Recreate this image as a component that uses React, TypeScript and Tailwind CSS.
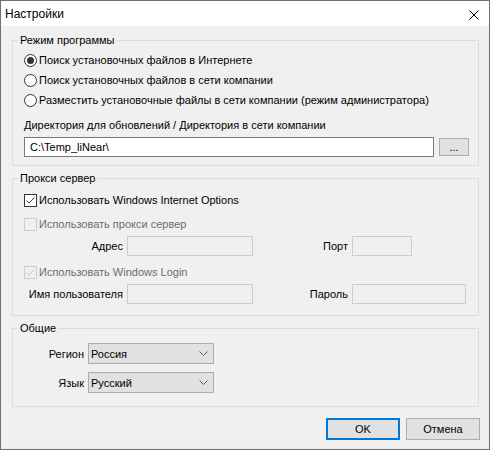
import React from "react";

type BoxProps = { checked?: boolean; disabled?: boolean; label: string };

function Radio({ checked, label }: BoxProps) {
  return (
    <label className="flex h-[20px] items-center">
      <span className="flex h-[13px] w-[13px] items-center justify-center rounded-full border border-[#333333] bg-white">
        {checked && <span className="h-[7px] w-[7px] rounded-full bg-[#333333]" />}
      </span>
      <span className="ml-[2px]">{label}</span>
    </label>
  );
}

function Checkbox({ checked, disabled, label }: BoxProps) {
  return (
    <label className="flex h-[20px] items-center">
      <span
        className={`flex h-[13px] w-[13px] items-center justify-center border ${
          disabled ? "border-[#cccccc] bg-[#f0f0f0]" : "border-[#333333] bg-white"
        }`}
      >
        {checked && (
          <svg width="11" height="11" viewBox="0 0 11 11">
            <path
              d="M1.5 5.5 L4 8 L9.5 2.5"
              fill="none"
              stroke={disabled ? "#c4c4c4" : "#333333"}
              strokeWidth="1"
            />
          </svg>
        )}
      </span>
      <span className={`ml-[2px] ${disabled ? "text-[#6d6d6d]" : ""}`}>{label}</span>
    </label>
  );
}

function GroupBox({ title, className, children }: { title: string; className?: string; children: React.ReactNode }) {
  return (
    <fieldset className={`border border-[#dcdcdc] ${className ?? ""}`}>
      <legend className="ml-[5px] px-[2px] leading-[15px]">{title}</legend>
      {children}
    </fieldset>
  );
}

function Combo({ value }: { value: string }) {
  return (
    <div className="flex h-[21px] w-[126px] items-center justify-between border border-[#adadad] bg-[#e1e1e1] pl-[2px] pr-[5px]">
      <span>{value}</span>
      <svg width="9" height="5" viewBox="0 0 9 5">
        <path d="M0.5 0.5 L4.5 4.5 L8.5 0.5" fill="none" stroke="#606060" strokeWidth="1" />
      </svg>
    </div>
  );
}

// disabled text box of the proxy section
function Field({ width }: { width: string }) {
  return <div className={`h-[20px] border border-[#cccccc] bg-[#f0f0f0] ${width}`} />;
}

export default function App() {
  return (
    <div className="flex h-[450px] w-[490px] flex-col whitespace-nowrap border border-[#707070] bg-[#f0f0f0] font-['Liberation_Sans',sans-serif] text-[11px] leading-[16px] text-black">
      {/* title bar */}
      <div className="flex h-[25px] items-center justify-between bg-white pl-[4px] pr-[10px]">
        <span className="text-[12px]">Настройки</span>
        <svg width="10" height="10" viewBox="0 0 10 10" className="mt-[2px]">
          <path d="M0.5 0.5 L9.5 9.5 M9.5 0.5 L0.5 9.5" stroke="#000" strokeWidth="1" />
        </svg>
      </div>

      <div className="flex flex-1 flex-col pl-[11px] pr-[10px]">
        <GroupBox title="Режим программы" className="mt-[7px]">
          <div className="flex flex-col pb-[8px] pl-[11px] pr-[9px] pt-[2px]">
            <Radio checked label="Поиск установочных файлов в Интернете" />
            <Radio label="Поиск установочных файлов в сети компании" />
            <Radio label="Разместить установочные файлы в сети компании (режим администратора)" />
            <div className="mt-[7px]">Директория для обновлений / Директория в сети компании</div>
            <div className="mt-[4px] flex items-center gap-[5px]">
              <div className="flex h-[20px] flex-1 items-center border border-[#7a7a7a] bg-white pl-[5px]">
                {"C:\\Temp_liNear\\"}
              </div>
              <button className="flex h-[18px] w-[30px] items-center justify-center border border-[#adadad] bg-[#e1e1e1]">
                ...
              </button>
            </div>
          </div>
        </GroupBox>

        <GroupBox title="Прокси сервер" className="mt-[5px]">
          <div className="flex flex-col pb-[11px] pl-[11px] pt-[4px]">
            <Checkbox checked label="Использовать Windows Internet Options" />
            <div className="mt-[4px]">
              <Checkbox disabled label="Использовать прокси сервер" />
            </div>
            <div className="mt-[2px] flex h-[20px] items-center">
              <span className="w-[99px] text-right">Адрес</span>
              <div className="ml-[4px]">
                <Field width="w-[126px]" />
              </div>
              <span className="w-[95px] text-right">Порт</span>
              <div className="ml-[4px]">
                <Field width="w-[60px]" />
              </div>
            </div>
            <div className="mt-[6px]">
              <Checkbox checked disabled label="Использовать Windows Login" />
            </div>
            <div className="mt-[2px] flex h-[20px] items-center">
              <span className="w-[99px] text-right">Имя пользователя</span>
              <div className="ml-[4px]">
                <Field width="w-[126px]" />
              </div>
              <span className="w-[95px] text-right">Пароль</span>
              <div className="ml-[4px]">
                <Field width="w-[114px]" />
              </div>
            </div>
          </div>
        </GroupBox>

        <GroupBox title="Общие" className="mt-[5px]">
          <div className="flex flex-col gap-[8px] pb-[13px] pl-[11px] pt-[7px]">
            <div className="flex items-center">
              <span className="w-[60px] text-right">Регион</span>
              <div className="ml-[4px]">
                <Combo value="Россия" />
              </div>
            </div>
            <div className="flex items-center">
              <span className="w-[60px] text-right">Язык</span>
              <div className="ml-[4px]">
                <Combo value="Русский" />
              </div>
            </div>
          </div>
        </GroupBox>

        <div className="mr-[-1px] mt-[11px] flex justify-end gap-[6px]">
          <button className="h-[22px] w-[74px] border-2 border-[#0078d7] bg-[#e1e1e1]">OK</button>
          <button className="h-[22px] w-[74px] border border-[#adadad] bg-[#e1e1e1]">Отмена</button>
        </div>
      </div>
    </div>
  );
}
